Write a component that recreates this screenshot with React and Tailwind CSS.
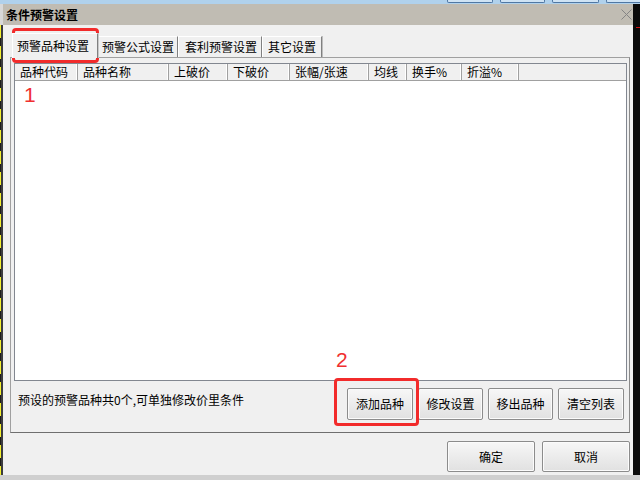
import React from "react";

const FONT = "font-['Noto_Sans_CJK_SC','Noto_Sans',sans-serif]";

const cols = [
  { w: 63, t: "品种代码" },
  { w: 91, t: "品种名称" },
  { w: 59, t: "上破价" },
  { w: 62, t: "下破价" },
  { w: 79, t: "张幅/张速" },
  { w: 38, t: "均线" },
  { w: 55, t: "换手%" },
  { w: 57, t: "折溢%" },
];

function Btn({ children, w, h }) {
  return (
    <div
      className="flex items-center justify-center border border-[#8c8c8c] rounded-[2px] bg-gradient-to-b from-[#f7f7f7] to-[#e1e1e1] text-[12px] text-black shadow-[inset_0_0_0_1px_#fbfbfb]"
      style={{ width: w, height: h }}
    >
      {children}
    </div>
  );
}

export default function App() {
  return (
    <div className={`relative w-[640px] h-[480px] overflow-hidden bg-[#f0f0f0] flex flex-col ${FONT}`}>
      {/* top strip of background window */}
      <div className="h-[4px] bg-[#b0d1ec] flex justify-end items-start gap-[7px] pl-[447px]">
        <div className="w-[46px] h-[3px] bg-[#cfe3f4] border-b border-x border-[#4f77a3] rounded-b-[2px]" />
        <div className="w-[45px] h-[3px] bg-[#cfe3f4] border-b border-x border-[#4f77a3] rounded-b-[2px]" />
        <div className="w-[47px] h-[3px] bg-[#cfe3f4] border-b border-x border-[#4f77a3] rounded-b-[2px]" />
        <div className="flex-1 h-[3px] bg-[#cfe3f4] border-b border-l border-[#4f77a3] rounded-bl-[2px]" />
      </div>

      <div className="flex-1 flex">
        {/* left strip */}
        <div className="w-[3px] flex flex-col">
          <div className="h-[21px] bg-[#d8d8d8]" />
          <div className="flex-1 flex">
            <div className="w-[1px] bg-[repeating-linear-gradient(to_bottom,#f2ef2e_0px,#f2ef2e_13px,#1c1c1c_13px,#1c1c1c_21px)]" />
            <div className="w-[2px] bg-[#3c3c3c]" />
          </div>
        </div>

        {/* dialog */}
        <div className="w-[630px] flex flex-col">
          {/* title bar */}
          <div className="h-[21px] bg-[#c0bcb3] flex items-center pl-[3px] pr-[1px]">
            <span className="text-[12px] font-bold text-black leading-none">条件预警设置</span>
            <div className="flex-1" />
            <svg width="11" height="11" viewBox="0 0 11 11" className="mb-[0px]">
              <path d="M0.5 0.5 L10.5 10.5 M10.5 0.5 L0.5 10.5" stroke="#858585" strokeWidth="1" fill="none" />
            </svg>
          </div>

          {/* body */}
          <div className="flex-1 flex flex-col pl-[7px] pr-[3px] pt-[8px]">
            {/* tabs */}
            <div className="h-[24px] flex items-end pl-[2px] text-[12px] text-black">
              <div className="relative z-10 w-[86px] h-[25px] -mb-[1px] bg-[#f0f0f0] border-t border-l border-white border-r border-r-[#808080] shadow-[1px_0_0_#c8c8c8] flex items-center pl-[4px]">
                预警品种设置
              </div>
              <div className="w-[80px] h-[21px] border-t border-white border-r border-r-[#808080] shadow-[1px_0_0_#bdbdbd] flex items-center pl-[4px]">
                预警公式设置
              </div>
              <div className="w-[84px] h-[21px] border-t border-l border-white border-r border-r-[#808080] shadow-[1px_0_0_#bdbdbd] flex items-center pl-[6px]">
                套利预警设置
              </div>
              <div className="w-[60px] h-[21px] border-t border-l border-white border-r border-r-[#808080] shadow-[1px_0_0_#bdbdbd] flex items-center pl-[5px]">
                其它设置
              </div>
            </div>

            {/* panel */}
            <div className="relative z-0 h-[376px] border border-[#a0a0a0] border-b-[#6f6f6f] border-r-[#8a8a8a] flex flex-col pl-[3px] pr-[2px] pt-[5px]">
              {/* list */}
              <div className="h-[318px] border border-[#828790] bg-white flex flex-col">
                <div className="h-[17px] flex bg-[#f0f0f0] border-b border-[#a0a0a0] text-[12px] text-black leading-none">
                  {cols.map((c) => (
                    <div
                      key={c.t}
                      className="flex items-center pl-[5px] border-r border-[#a0a0a0] shadow-[inset_-1px_0_0_#ffffff]"
                      style={{ width: c.w }}
                    >
                      {c.t}
                    </div>
                  ))}
                  <div className="flex-1" />
                </div>
                <div className="flex-1 bg-white" />
              </div>

              {/* status row */}
              <div className="flex items-start pt-[7px] pr-[3px]">
                <span className="mt-[5px] pl-[4px] text-[12px] leading-[14px] text-black">
                  预设的预警品种共0个,可单独修改价里条件
                </span>
                <div className="flex-1" />
                <div className="flex gap-[5px]">
                  <Btn w={66} h={32}>添加品种</Btn>
                  <Btn w={65} h={32}>修改设置</Btn>
                  <Btn w={65} h={32}>移出品种</Btn>
                  <Btn w={66} h={32}>清空列表</Btn>
                </div>
              </div>
            </div>

            {/* bottom buttons */}
            <div className="flex justify-end gap-[7px] pt-[8px] pr-[0px]">
              <Btn w={88} h={31}>确定</Btn>
              <Btn w={88} h={31}>取消</Btn>
            </div>
          </div>
        </div>

        {/* right strip */}
        <div className="flex-1 bg-[#0a0a0a] flex flex-col">
          <div className="h-[23px]" />
          <div className="h-[1px] bg-[#d01010] ml-[3px]" />
        </div>
      </div>

      <div className="h-[5px] bg-[#cfcfcf]" />

      {/* annotations */}
      <div className="absolute left-[12px] top-[28px] w-[87px] h-[35px] border-[3px] border-[#f22b2b] rounded-[4px]" />
      <div className="absolute left-[24px] top-[84px] text-[21px] leading-none text-[#f03030] font-['Liberation_Sans',sans-serif]">1</div>
      <div className="absolute left-[334px] top-[378px] w-[85px] h-[48px] border-[3px] border-[#f22b2b] rounded-[4px]" />
      <div className="absolute left-[336px] top-[349px] text-[21px] leading-none text-[#f03030] font-['Liberation_Sans',sans-serif]">2</div>
    </div>
  );
}
